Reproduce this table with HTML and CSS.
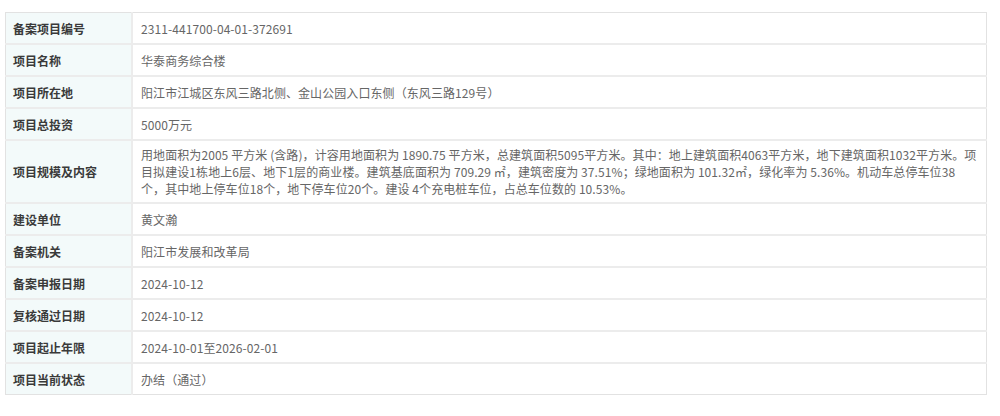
FILE: index.html
```html
<!DOCTYPE html>
<html lang="zh-CN">
<head>
<meta charset="utf-8">
<title>备案项目详情</title>
<link rel="stylesheet" href="styles.css">
</head>
<body>
<div class="page">
<table class="info">
<tbody>
<tr><th>备案项目编号</th><td>2311-441700-04-01-372691</td></tr>
<tr><th>项目名称</th><td>华泰商务综合楼</td></tr>
<tr><th>项目所在地</th><td>阳江市江城区东风三路北侧、金山公园入口东侧（东风三路129号）</td></tr>
<tr><th>项目总投资</th><td>5000万元</td></tr>
<tr class="tall"><th>项目规模及内容</th><td>用地面积为2005 平方米 (含路)，计容用地面积为 1890.75 平方米，总建筑面积5095平方米。其中：地上建筑面积4063平方米，地下建筑面积1032平方米。项目拟建设1栋地上6层、地下1层的商业楼。建筑基底面积为 709.29 ㎡，建筑密度为 37.51%；绿地面积为 101.32㎡，绿化率为 5.36%。机动车总停车位38<br>个，其中地上停车位18个，地下停车位20个。建设 4个充电桩车位，占总车位数的 10.53%。</td></tr>
<tr><th>建设单位</th><td>黄文瀚</td></tr>
<tr><th>备案机关</th><td>阳江市发展和改革局</td></tr>
<tr><th>备案申报日期</th><td>2024-10-12</td></tr>
<tr><th>复核通过日期</th><td>2024-10-12</td></tr>
<tr><th>项目起止年限</th><td>2024-10-01至2026-02-01</td></tr>
<tr><th>项目当前状态</th><td>办结（通过）</td></tr>
</tbody>
</table>
</div>
</body>
</html>
```
FILE: styles.css
```css
html, body {
  margin: 0;
  padding: 0;
  background: #fff;
}
.page {
  padding: 12px 13px 0 5px;
  font-family: "Noto Sans CJK SC", "Noto Sans", sans-serif;
  font-size: 12px;
}
.info {
  width: 100%;
  border-collapse: collapse;
  border: 1px solid #e2e2e2;
}
.info th,
.info td {
  border-bottom: 2px solid #ececec;
  text-align: left;
  vertical-align: middle;
  line-height: 17px;
  padding: 7px 8px 6px;
}
.info th {
  width: 110px;
  background: #f3fafa;
  color: #3a3a3a;
  font-weight: bold;
  padding-left: 7px;
  border-right: 2px solid #ececec;
}
.info td {
  color: #666;
  letter-spacing: 0.08px;
}
.info .tall th,
.info .tall td {
  padding-top: 5px;
  padding-bottom: 5px;
}
.info tr:last-child th,
.info tr:last-child td {
  border-bottom: 1px solid #e2e2e2;
}
```
